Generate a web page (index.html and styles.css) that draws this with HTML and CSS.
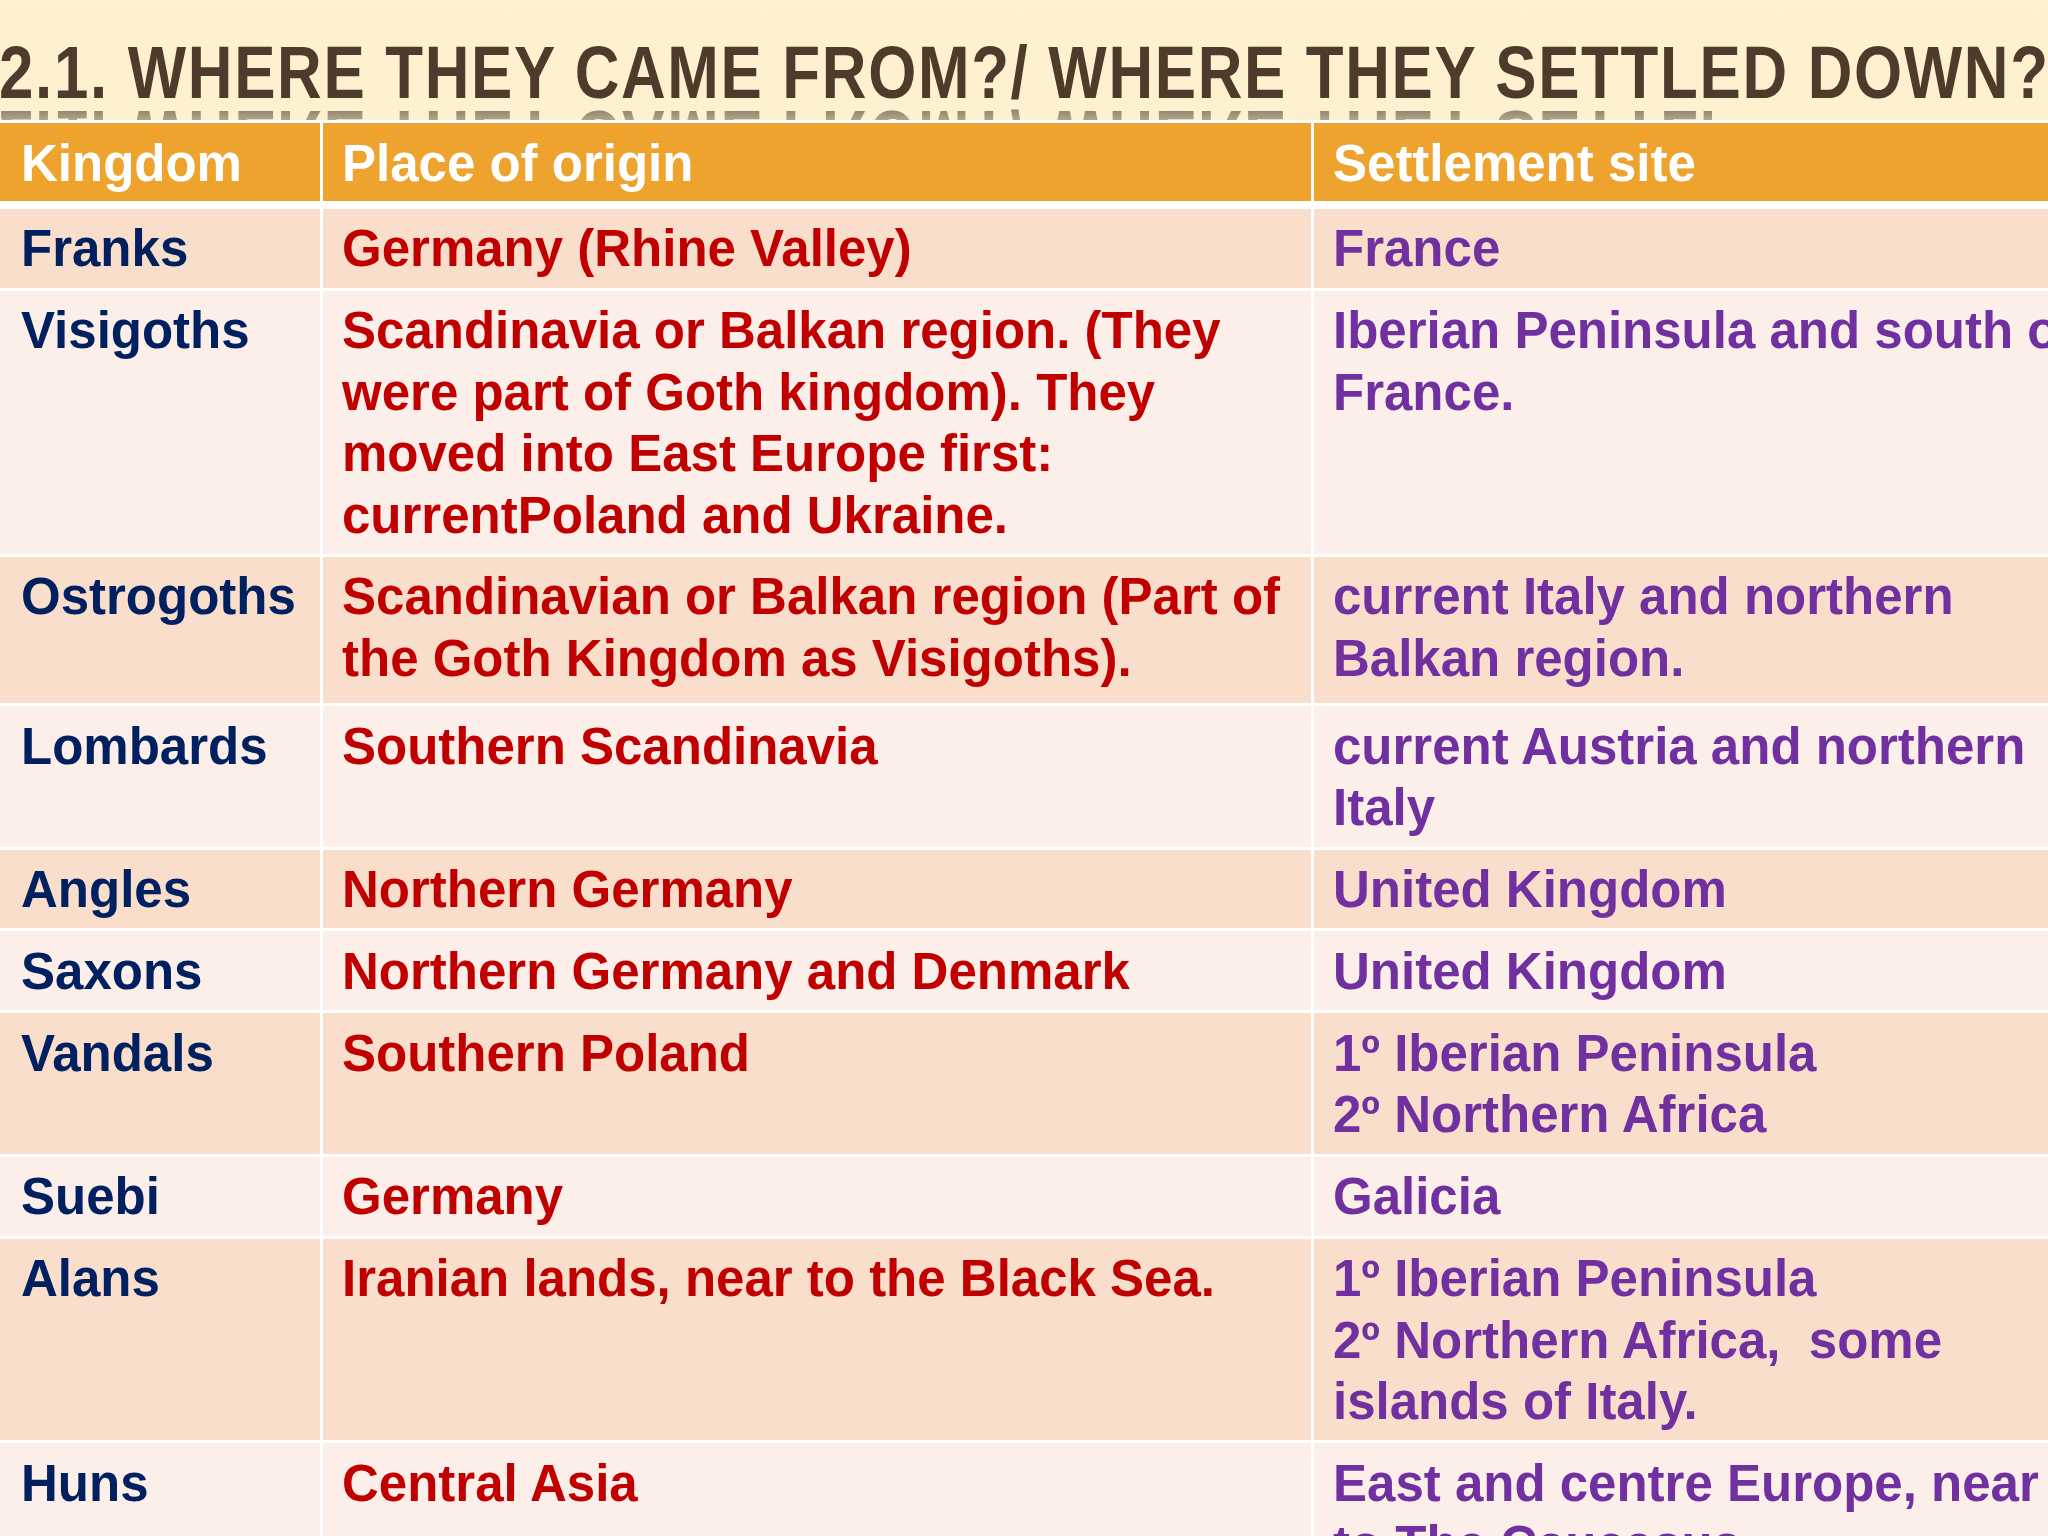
FILE: index.html
```html
<!DOCTYPE html>
<html lang="en">
<head>
<meta charset="utf-8">
<title>2.1. Where they came from? / Where they settled down?</title>
<link rel="stylesheet" href="styles.css">
</head>
<body>
<div class="slide">
  <h1 class="title">2.1. WHERE THEY CAME FROM?/ WHERE THEY SETTLED DOWN?</h1>
  <div class="table">
    <div class="row head">
      <div class="cell c1">Kingdom</div>
      <div class="cell c2">Place of origin</div>
      <div class="cell c3">Settlement site</div>
    </div>
    <div class="row dark">
      <div class="cell c1">Franks</div>
      <div class="cell c2">Germany (Rhine Valley)</div>
      <div class="cell c3">France</div>
    </div>
    <div class="row light">
      <div class="cell c1">Visigoths</div>
      <div class="cell c2">Scandinavia or Balkan region. (They<br>were part of Goth kingdom). They<br>moved into East Europe first:<br>currentPoland and Ukraine.</div>
      <div class="cell c3">Iberian Peninsula and south of<br>France.</div>
    </div>
    <div class="row dark extra">
      <div class="cell c1">Ostrogoths</div>
      <div class="cell c2">Scandinavian or Balkan region (Part of<br>the Goth Kingdom as Visigoths).</div>
      <div class="cell c3">current Italy and northern<br>Balkan region.</div>
    </div>
    <div class="row light">
      <div class="cell c1">Lombards</div>
      <div class="cell c2">Southern Scandinavia</div>
      <div class="cell c3">current Austria and northern<br>Italy</div>
    </div>
    <div class="row dark">
      <div class="cell c1">Angles</div>
      <div class="cell c2">Northern Germany</div>
      <div class="cell c3">United Kingdom</div>
    </div>
    <div class="row light">
      <div class="cell c1">Saxons</div>
      <div class="cell c2">Northern Germany and Denmark</div>
      <div class="cell c3">United Kingdom</div>
    </div>
    <div class="row dark">
      <div class="cell c1">Vandals</div>
      <div class="cell c2">Southern Poland</div>
      <div class="cell c3">1º Iberian Peninsula<br>2º Northern Africa</div>
    </div>
    <div class="row light">
      <div class="cell c1">Suebi</div>
      <div class="cell c2">Germany</div>
      <div class="cell c3">Galicia</div>
    </div>
    <div class="row dark">
      <div class="cell c1">Alans</div>
      <div class="cell c2">Iranian lands, near to the Black Sea.</div>
      <div class="cell c3">1º Iberian Peninsula<br>2º Northern Africa,&nbsp; some<br>islands of Italy.</div>
    </div>
    <div class="row light">
      <div class="cell c1">Huns</div>
      <div class="cell c2">Central Asia</div>
      <div class="cell c3">East and centre Europe, near<br>to The Caucasus.</div>
    </div>
  </div>
</div>
</body>
</html>
```

FILE: styles.css
```css
html, body {
  margin: 0;
  padding: 0;
  overflow: hidden;
  background: #fdf0cd;
}

.slide {
  width: 2048px;
  height: 1536px;
  overflow: hidden;
  background: linear-gradient(180deg, #fdf1cf 0%, #fcefd3 100%);
  font-family: "Liberation Sans", Arial, sans-serif;
}

.title {
  margin: 36px 0 10px -1px;
  height: 74px;
  font-size: 74px;
  line-height: 74px;
  font-weight: bold;
  letter-spacing: 2px;
  color: #4e3b2b;
  white-space: nowrap;
  transform: scaleX(0.836);
  transform-origin: 0 0;
  -webkit-box-reflect: below -11px linear-gradient(transparent 40%, rgba(255, 255, 255, 0.8));
}

.table {
  position: relative;
  z-index: 1;
  display: flex;
  flex-direction: column;
  gap: 3px;
  width: 2214px;
  padding-top: 3px;
  background: #ffffff;
}

.row {
  display: grid;
  grid-template-columns: 320px 988px 900px;
  column-gap: 3px;
}

.cell {
  padding: 9.5px 18px 8px 19px;
  font-size: 51px;
  line-height: 61.4px;
  font-weight: bold;
  white-space: nowrap;
}

.cell.c1 {
  padding-left: 21px;
  color: #002060;
}

.cell.c2 {
  color: #c00000;
}

.cell.c3 {
  color: #7030a0;
}

.head {
  margin-bottom: 5px;
}

.head .cell {
  padding-bottom: 7px;
  background: #eea32f;
  color: #ffffff;
}

.dark .cell {
  background: #f9dfcb;
}

.light .cell {
  background: #fcefe9;
}

.extra .cell {
  padding-bottom: 14px;
}
```
